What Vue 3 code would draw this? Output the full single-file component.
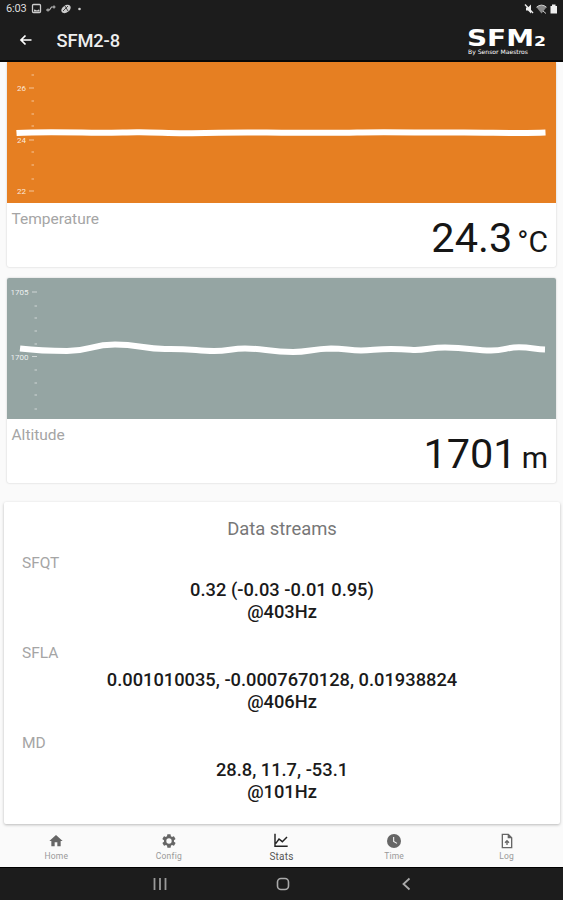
<script setup>
import { ref } from 'vue';

const sensors = [
  {
    name: 'Temperature',
    value: '24.3',
    unit: '°C',
    color: 'orange',
    line: 'M9.500 71 C25 70 50 70 75 70.5 S110 70.5 130 70.3 S165 71.8 185 71.2 S225 70.2 260 70.5 S320 71.2 350 70.5 S420 70.8 450 70.5 S510 71.7 538.500 70.5',
    tickX: 24.5,
    labels: [
      { text: '26', x: 10, y: 26.5 },
      { text: '24', x: 10, y: 78.5 },
      { text: '22', x: 10, y: 129.5 },
    ],
    ticks: [13, 39, 52, 64, 90, 103, 117],
  },
  {
    name: 'Altitude',
    value: '1701',
    unit: 'm',
    color: 'grey',
    line: 'M13 70.5 C30 72.5 45 73 60 73 C83 73 84 66.5 108 66.5 C132 66.5 136 71 158 71 C184 70.5 190 73 207 73 C222 73 224 70.5 238 70.5 C256 70.5 262 73.7 286 74 C302 74 304 71 324 70.5 C338 70.5 342 72.5 354 72.5 C366 72.5 368 71 384 71 C400 71 404 72 408 72 C420 72 424 69.5 438 69.5 C462 69.5 467 72.5 484 72.5 C498 72.5 499 69.3 512 69.3 C524 69.3 528 71.2 538 71.5',
    tickX: 27.5,
    labels: [
      { text: '1705', x: 3.5, y: 14.5 },
      { text: '1700', x: 3.5, y: 79 },
    ],
    ticks: [28, 40, 53, 66, 92, 105, 117, 131],
  },
];

const streams = [
  { name: 'SFQT', value: '0.32 (-0.03 -0.01 0.95)', rate: '@403Hz' },
  { name: 'SFLA', value: '0.001010035, -0.0007670128, 0.01938824', rate: '@406Hz' },
  { name: 'MD', value: '28.8, 11.7, -53.1', rate: '@101Hz' },
];

const tabs = ['Home', 'Config', 'Stats', 'Time', 'Log'];
const activeTab = ref('Stats');
</script>

<template>
  <div class="screen">
    <header class="header">
      <div class="status">
        <span class="clock">6:03</span>
        <svg class="status-left" width="54" height="12" viewBox="0 0 54 12">
          <rect x="1.5" y="1.5" width="8" height="8" rx="1" fill="none" stroke="#ccc" stroke-width="1.3" />
          <path d="M3 8.500V6.500l2 .5 1 .5 1.500-1 1 .5v1.500z" fill="#ccc" />
          <path d="M15 7h3.500l2-3h4M17 5.500v3M23 2.500v3" fill="none" stroke="#bbb" stroke-width="1.200" />
          <ellipse cx="35" cy="6" rx="5.200" ry="3.500" transform="rotate(-35 35 6)" fill="#ccc" />
          <path d="M32 8l5-5M34 3l3 5" stroke="#333" stroke-width="0.900" />
          <circle cx="48.500" cy="6" r="1.300" fill="#ccc" />
        </svg>
        <svg class="status-right" width="36" height="12" viewBox="0 0 36 12">
          <path d="M2 4.500h2l3-3v9l-3-3H2z" fill="#eee" />
          <path d="M1 1.500l8 8.500" stroke="#eee" stroke-width="1.300" />
          <path d="M12.500 4.200Q17.500 0 22.500 4.200L17.500 10.500z" fill="#888" />
          <path d="M12.500 4.200Q17.500 0 22.500 4.200M19 8l3 2.500" fill="none" stroke="#ccc" />
          <path d="M26.500 3h1.500V1.500h3.500V3H33v7.500h-6.500z" fill="#eee" />
        </svg>
      </div>
      <div class="toolbar">
        <svg class="back" width="14" height="14" viewBox="0 0 14 14">
          <path d="M12.500 7H2M6.500 2.500L2 7l4.500 4.500" fill="none" stroke="#fff" stroke-width="1.700" />
        </svg>
        <h1>SFM2-8</h1>
        <svg class="logo" width="82" height="36" viewBox="0 0 82 36">
          <text class="logo-main" x="0" y="24" textLength="67" lengthAdjust="spacingAndGlyphs">SFM</text>
          <text class="logo-two" x="67" y="24" textLength="12" lengthAdjust="spacingAndGlyphs">2</text>
          <text class="logo-sub" x="1" y="31.500" textLength="60" lengthAdjust="spacingAndGlyphs">By Sensor Maestros</text>
        </svg>
      </div>
    </header>

    <main class="content">
      <section v-for="s in sensors" :key="s.name" class="card">
        <svg class="chart" :class="s.color" width="549" height="141" viewBox="0 0 549 141">
          <text
            v-for="l in s.labels"
            :key="l.text"
            class="axis"
            :x="l.x"
            :y="l.y + 2.500"
          >{{ l.text }}</text>
          <path
            v-for="l in s.labels"
            :key="'m' + l.text"
            class="tick"
            :d="`M${s.tickX - 2.500} ${l.y - 0.500}h5`"
          />
          <path v-for="t in s.ticks" :key="t" class="tick" :d="`M${s.tickX} ${t}h2.500`" />
          <path class="line" :d="s.line" />
        </svg>
        <div class="reading">
          <span class="label">{{ s.name }}</span>
          <div class="number">
            <span class="value">{{ s.value }}</span>
            <span class="unit">{{ s.unit }}</span>
          </div>
        </div>
      </section>

      <section class="streams">
        <h2>Data streams</h2>
        <div v-for="s in streams" :key="s.name" class="stream">
          <span class="stream-name">{{ s.name }}</span>
          <p>{{ s.value }}</p>
          <p>{{ s.rate }}</p>
        </div>
      </section>
    </main>

    <nav class="tabs">
      <button
        v-for="tab in tabs"
        :key="tab"
        class="tab"
        :class="{ active: tab === activeTab }"
        @click="activeTab = tab"
      >
        <svg width="16" height="16" viewBox="0 0 24 24">
          <path v-if="tab === 'Home'" d="M10 20v-6h4v6h5v-8h3L12 3 2 12h3v8z" fill="currentColor" />
          <path
            v-else-if="tab === 'Config'"
            fill="currentColor"
            d="M19.400 13c.1-.6.1-1.400 0-2l2.100-1.700a.5.5 0 0 0 .1-.6l-2-3.500a.5.5 0 0 0-.6-.2l-2.500 1a7 7 0 0 0-1.700-1l-.4-2.600a.5.5 0 0 0-.5-.4h-4a.5.5 0 0 0-.5.4L9 5a7 7 0 0 0-1.700 1l-2.500-1a.5.5 0 0 0-.6.2l-2 3.500a.5.5 0 0 0 .1.6L4.500 11a8 8 0 0 0 0 2l-2.100 1.700a.5.5 0 0 0-.1.6l2 3.500c.1.2.4.3.6.2l2.500-1a7 7 0 0 0 1.700 1l.4 2.600c0 .2.200.4.5.4h4c.2 0 .5-.2.5-.4l.4-2.600a7 7 0 0 0 1.700-1l2.500 1c.2.1.5 0 .6-.2l2-3.500a.5.5 0 0 0-.1-.6zM12 16a4 4 0 1 1 0-8 4 4 0 0 1 0 8z"
          />
          <path
            v-else-if="tab === 'Stats'"
            d="M3 1v19h19M4 16l5-7 5 4 7-7"
            fill="none"
            stroke="currentColor"
            stroke-width="2.200"
          />
          <g v-else-if="tab === 'Time'">
            <circle cx="12" cy="12" r="10.500" fill="currentColor" />
            <path d="M11.500 6v6.500l5 3" fill="none" stroke="#fafafa" stroke-width="1.600" />
          </g>
          <path
            v-else
            d="M5 2h9l5 5v15H5zM14 2v5h5M12 18v-6M9 14.500l3-3 3 3"
            fill="none"
            stroke="currentColor"
            stroke-width="2"
          />
        </svg>
        <span>{{ tab }}</span>
      </button>
    </nav>

    <footer class="system">
      <svg width="14" height="14" viewBox="0 0 14 14">
        <path d="M1.500 1v12M7 1v12M12.500 1v12" stroke="#999" stroke-width="1.800" />
      </svg>
      <svg width="14" height="14" viewBox="0 0 14 14">
        <rect x="1.500" y="1.500" width="11" height="11" rx="3.500" fill="none" stroke="#aaa" stroke-width="1.600" />
      </svg>
      <svg width="14" height="14" viewBox="0 0 14 14">
        <path d="M9.500 1.500L3.500 7l6 5.500" fill="none" stroke="#aaa" stroke-width="1.800" />
      </svg>
    </footer>
  </div>
</template>

<style>
body {
  margin: 0;
  background: #fafafa;
}
</style>

<style scoped>
.screen {
  width: 563px;
  height: 900px;
  display: flex;
  flex-direction: column;
  overflow: hidden;
  background: #fafafa;
  font-family: Roboto, "Liberation Sans", sans-serif;
}

svg {
  display: block;
  flex: none;
}

.header {
  box-sizing: border-box;
  height: 62px;
  flex: none;
  background: #1c1c1c;
  border-bottom: 2px solid #080808;
}

.status {
  display: flex;
  align-items: center;
  height: 18px;
  padding: 0 3px 0 6px;
}

.clock {
  width: 25px;
  font-size: 11px;
  line-height: 18px;
  letter-spacing: -0.2px;
  color: #ddd;
}

.status-right {
  margin-left: auto;
}

.toolbar {
  display: flex;
  align-items: center;
  height: 44px;
  padding: 0 14px 0 19px;
}

h1 {
  margin: 0 auto 0 23.5px;
  font-size: 18.3px;
  font-weight: 500;
  letter-spacing: -0.1px;
  color: #eee;
}

.logo text {
  font-family: "DejaVu Sans", sans-serif;
  font-weight: bold;
  fill: #fff;
}

.logo .logo-main {
  font-size: 23px;
}

.logo .logo-two {
  font-size: 14px;
}

.logo .logo-sub {
  font-size: 6px;
  font-weight: normal;
}

.content {
  height: 765px;
  flex: none;
}

.card {
  width: 549px;
  height: 205px;
  margin: 0 0 11px 7px;
  background: #fff;
  border-radius: 2px;
  box-shadow: 0 0 2px rgba(0, 0, 0, 0.22);
}

.chart.orange {
  background: #e67f22;
}

.chart.grey {
  background: #95a5a3;
  border-radius: 2px 2px 0 0;
}

.axis {
  font-size: 8px;
  fill: rgba(255, 255, 255, 0.85);
}

.tick {
  fill: none;
  stroke: rgba(255, 255, 255, 0.55);
  stroke-width: 1;
}

.line {
  fill: none;
  stroke: #fff;
  stroke-width: 6;
}

.reading {
  display: flex;
  justify-content: space-between;
  height: 64px;
  padding: 0 8px 0 4.5px;
}

.label {
  margin-top: 7px;
  font-size: 15.5px;
  line-height: 19px;
  color: #a5a5a5;
}

.number {
  display: flex;
  align-items: baseline;
  gap: 5px;
  color: #161616;
  line-height: 69px;
}

.value {
  font-size: 41.5px;
}

.unit {
  font-size: 30px;
}

.streams {
  box-sizing: border-box;
  width: 556px;
  height: 322px;
  margin: 19px 0 0 4px;
  padding-top: 15px;
  background: #fff;
  border-radius: 2px;
  box-shadow: 0 1px 3px rgba(0, 0, 0, 0.26);
  text-align: center;
}

h2 {
  margin: 0 0 12px;
  font-size: 18.4px;
  line-height: 24px;
  font-weight: 400;
  color: #777;
}

.stream {
  height: 90px;
}

.stream-name {
  display: block;
  margin: 0 0 6px 18px;
  font-size: 15.5px;
  line-height: 20px;
  text-align: left;
  color: #a5a5a5;
}

.stream p {
  margin: 0;
  font-size: 18.3px;
  line-height: 22px;
  font-weight: 500;
  color: #1a1a1a;
}

.tabs {
  display: flex;
  height: 40px;
  flex: none;
}

.tab {
  flex: 1;
  display: flex;
  flex-direction: column;
  align-items: center;
  padding: 6px 0 0;
  border: none;
  background: none;
  font-family: inherit;
  font-size: 8.5px;
  line-height: 15px;
  letter-spacing: 0.2px;
  color: #666;
}

.tab span {
  color: #999;
}

.tab.active {
  font-size: 10px;
  color: #222;
}

.tab.active span {
  color: #555;
}

.system {
  box-sizing: border-box;
  display: flex;
  justify-content: center;
  align-items: center;
  gap: 109.5px;
  height: 33px;
  flex: none;
  padding-left: 3px;
  background: #1c1c1c;
  border-top: 1px solid #000;
}
</style>
